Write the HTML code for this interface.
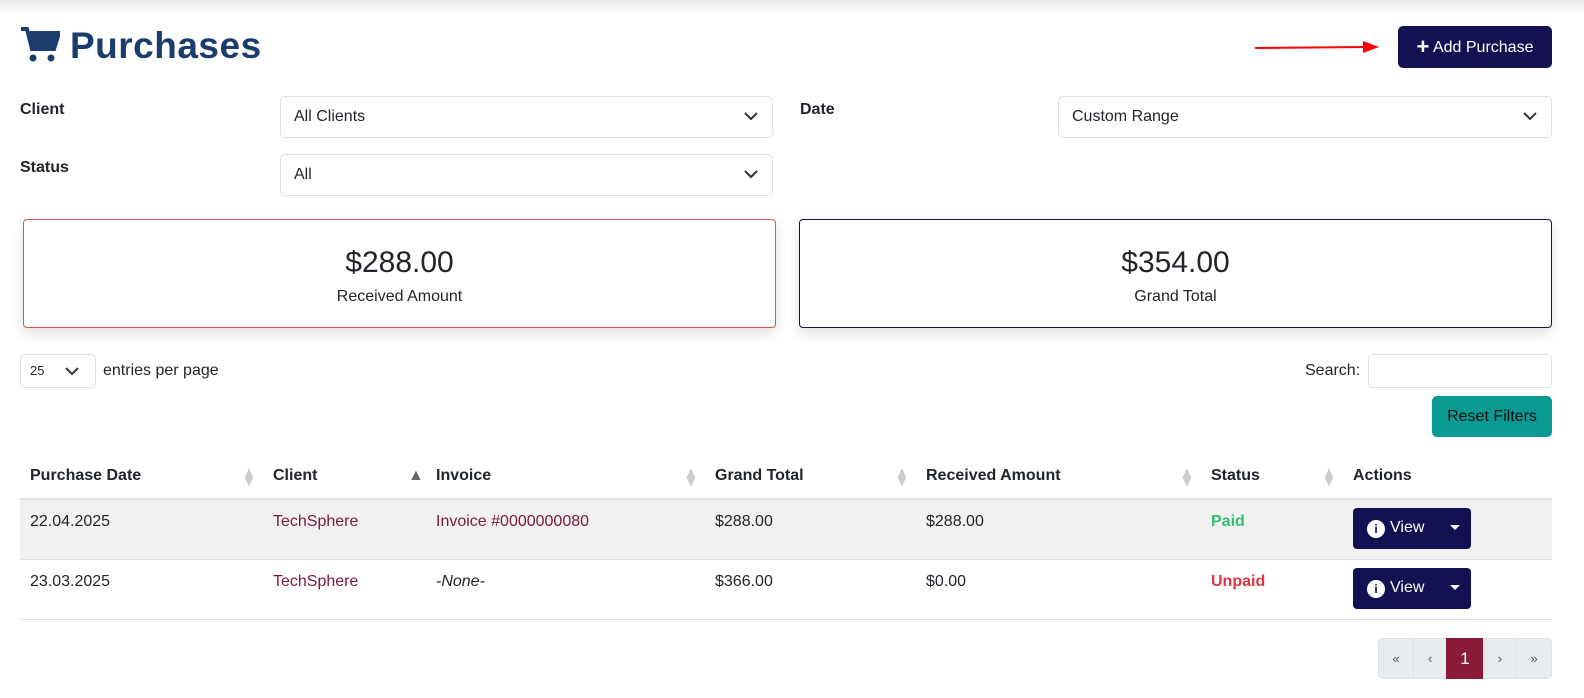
<!DOCTYPE html>
<html style="overflow:hidden;width:1584px;height:698px"><head><style>
*{box-sizing:border-box;margin:0;padding:0}
body{width:1584px;height:698px;overflow:hidden;background:#fff;font-family:"Liberation Sans",sans-serif;color:#212529;position:relative;font-size:16px}
.abs{position:absolute}
.topsh{left:0;top:0;width:1584px;height:14px;background:linear-gradient(#e8e8e8,#fff)}
h1{position:absolute;left:70px;top:25px;font-size:37px;font-weight:bold;color:#1b3d6e;letter-spacing:0.5px}
.lbl{font-weight:bold;font-size:16px}
.sel{border:1px solid #dee2e6;border-radius:5px;height:42px;padding:0 13px;line-height:40px;font-size:16px}
.sel svg{position:absolute;right:14px;top:15px}
.card{border-radius:4px;text-align:center;box-shadow:0 6px 12px rgba(0,0,0,.12);background:#fff}
.card .v{font-size:30px;margin-top:26px}
.card .t{font-size:16px;margin-top:8px}
table{position:absolute;left:20px;top:454px;width:1532px;border-collapse:collapse;font-size:16px;table-layout:fixed}
th{text-align:left;font-weight:bold;height:45px;padding-left:10px;border-bottom:2px solid #dee2e6;position:relative}
td{height:60px;padding-left:10px;vertical-align:top;padding-top:13px;border-bottom:1px solid #dee2e6}
.dia{position:absolute;right:8px;top:13px;width:10px;height:18px;color:#ccc}
a{color:#7a1a34;text-decoration:none}
.btn{display:inline-block;background:#141152;color:#fff;border-radius:4px;width:118px;height:41px;margin-top:-5px;position:relative;font-size:16px}
.pg{position:absolute;top:638px;height:41px;background:#e9ecef;border:1px solid #dee2e6;text-align:center;line-height:39px;font-size:13px;color:#555}
</style></head><body>
<div class="abs topsh"></div>
<svg class="abs" style="left:20px;top:26px" width="40" height="37" viewBox="0 0 40 37"><path d="M1 3h6l5 20h22l5-16H10" fill="none" stroke="#1b3d6e" stroke-width="4"/><path d="M10 7h29l-5 16H13z" fill="#1b3d6e"/><circle cx="13" cy="32" r="3.5" fill="#1b3d6e"/><circle cx="31" cy="32" r="3.5" fill="#1b3d6e"/></svg>
<h1>Purchases</h1>
<svg class="abs" style="left:1255px;top:40px" width="125" height="16"><line x1="0" y1="8" x2="112" y2="7" stroke="red" stroke-width="2"/><path d="M108 1l16 6-16 6z" fill="red"/></svg>
<div class="abs" style="left:1398px;top:26px;width:154px;height:42px;background:#141152;color:#fff;border-radius:5px;line-height:42px;text-align:center;font-size:16px"><b style="font-size:22px;vertical-align:-2px">+</b> Add Purchase</div>
<div class="abs lbl" style="left:20px;top:101px">Client</div>
<div class="abs sel" style="left:280px;top:96px;width:493px">All Clients<svg width="14" height="9"><path d="M1 1l6 6 6-6" fill="none" stroke="#333" stroke-width="2"/></svg></div>
<div class="abs lbl" style="left:800px;top:101px">Date</div>
<div class="abs sel" style="left:1058px;top:96px;width:494px">Custom Range<svg width="14" height="9"><path d="M1 1l6 6 6-6" fill="none" stroke="#333" stroke-width="2"/></svg></div>
<div class="abs lbl" style="left:20px;top:159px">Status</div>
<div class="abs sel" style="left:280px;top:154px;width:493px">All<svg width="14" height="9"><path d="M1 1l6 6 6-6" fill="none" stroke="#333" stroke-width="2"/></svg></div>
<div class="abs card" style="left:23px;top:219px;width:753px;height:109px;border:1px solid #d9534f"><div class="v">$288.00</div><div class="t">Received Amount</div></div>
<div class="abs card" style="left:799px;top:219px;width:753px;height:109px;border:1px solid #141152"><div class="v">$354.00</div><div class="t">Grand Total</div></div>
<div class="abs sel" style="left:20px;top:354px;width:76px;height:34px;line-height:32px;font-size:13px;padding:0 9px">25<svg width="14" height="9" style="top:12px;right:16px"><path d="M1 1l6 6 6-6" fill="none" stroke="#333" stroke-width="2"/></svg></div>
<div class="abs" style="left:103px;top:362px">entries per page</div>
<div class="abs" style="left:1305px;top:362px">Search:</div>
<div class="abs" style="left:1368px;top:354px;width:184px;height:34px;border:1px solid #dee2e6;border-radius:4px"></div>
<div class="abs" style="left:1432px;top:396px;width:120px;height:41px;background:#0b9a93;border-radius:5px;line-height:41px;text-align:center;color:#111">Reset Filters</div>
<table>
<colgroup><col style="width:243px"><col style="width:163px"><col style="width:279px"><col style="width:211px"><col style="width:285px"><col style="width:142px"><col></colgroup>
<tr><th>Purchase Date<span class="dia">⧫</span></th><th>Client<span class="dia" style="color:#666">▲</span></th><th>Invoice<span class="dia">⧫</span></th><th>Grand Total<span class="dia">⧫</span></th><th>Received Amount<span class="dia">⧫</span></th><th>Status<span class="dia">⧫</span></th><th>Actions</th></tr>
<tr style="background:#f1f1f1"><td>22.04.2025</td><td><a>TechSphere</a></td><td><a>Invoice #0000000080</a></td><td>$288.00</td><td>$288.00</td><td style="color:#2fbf71;font-weight:bold">Paid</td><td><span class="btn"><span style="position:absolute;left:14px;top:12px;width:18px;height:18px;border-radius:50%;background:#fff;color:#141152;font-size:12px;font-weight:bold;text-align:center;line-height:18px">i</span><span style="position:absolute;left:37px;top:11px">View</span><span style="position:absolute;left:97px;top:17px;border:5px solid transparent;border-top-color:#fff"></span></span></td></tr>
<tr><td>23.03.2025</td><td><a>TechSphere</a></td><td><i>-None-</i></td><td>$366.00</td><td>$0.00</td><td style="color:#dc3545;font-weight:bold">Unpaid</td><td><span class="btn"><span style="position:absolute;left:14px;top:12px;width:18px;height:18px;border-radius:50%;background:#fff;color:#141152;font-size:12px;font-weight:bold;text-align:center;line-height:18px">i</span><span style="position:absolute;left:37px;top:11px">View</span><span style="position:absolute;left:97px;top:17px;border:5px solid transparent;border-top-color:#fff"></span></span></td></tr>
</table>
<div class="pg" style="left:1378px;width:36px;border-radius:5px 0 0 5px">«</div>
<div class="pg" style="left:1413px;width:34px">‹</div>
<div class="pg" style="left:1446px;width:38px;background:#8a1a3a;border-color:#8a1a3a;color:#fff;font-size:17px">1</div>
<div class="pg" style="left:1483px;width:34px">›</div>
<div class="pg" style="left:1516px;width:36px;border-radius:0 5px 5px 0">»</div>
</body></html>
